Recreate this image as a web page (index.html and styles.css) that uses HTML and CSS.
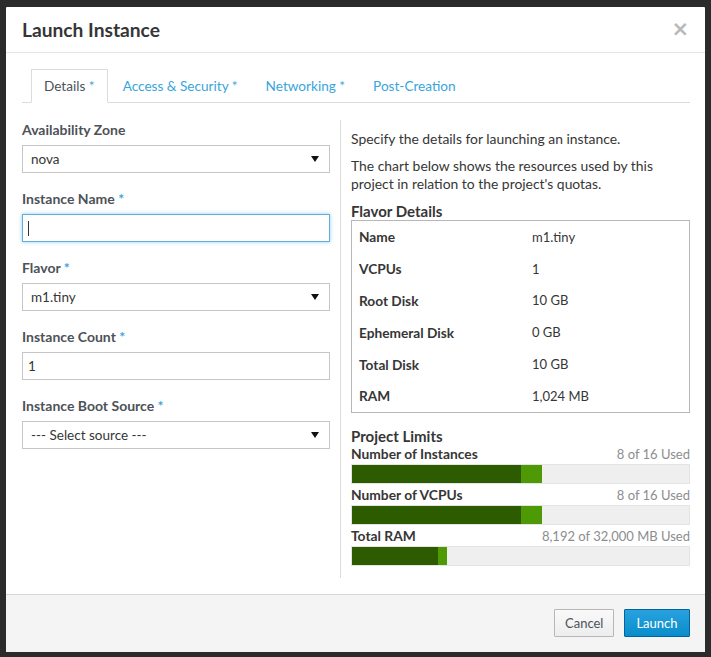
FILE: index.html
```html
<!DOCTYPE html>
<html>
<head>
<meta charset="utf-8">
<title>Launch Instance</title>
<link rel="stylesheet" href="styles.css">
</head>
<body>
<div class="backdrop">
  <div class="modal">
    <div class="modal-header">
      <h3 class="modal-title">Launch Instance</h3>
      <span class="close">×</span>
    </div>
    <div class="modal-body">
      <ul class="tabs">
        <li class="active"><a>Details <span class="req">*</span></a></li>
        <li><a>Access &amp; Security <span class="req">*</span></a></li>
        <li><a>Networking <span class="req">*</span></a></li>
        <li><a>Post-Creation</a></li>
      </ul>
      <div class="tab-content">
        <div class="left">
          <div class="form-group">
            <label class="label">Availability Zone</label>
            <div class="control select"><span>nova</span><span class="caret"></span></div>
          </div>
          <div class="form-group">
            <label class="label">Instance Name <span class="req">*</span></label>
            <div class="control input focus"><span class="cursor"></span></div>
          </div>
          <div class="form-group">
            <label class="label">Flavor <span class="req">*</span></label>
            <div class="control select"><span>m1.tiny</span><span class="caret"></span></div>
          </div>
          <div class="form-group">
            <label class="label">Instance Count <span class="req">*</span></label>
            <div class="control input count"><span>1</span></div>
          </div>
          <div class="form-group">
            <label class="label">Instance Boot Source <span class="req">*</span></label>
            <div class="control select"><span>--- Select source ---</span><span class="caret"></span></div>
          </div>
        </div>
        <div class="right">
          <p class="help">Specify the details for launching an instance.</p>
          <p class="help">The chart below shows the resources used by this project in relation to the project's quotas.</p>
          <h4 class="section-title">Flavor Details</h4>
          <div class="flavor-table">
            <div class="row"><span class="key">Name</span><span class="val">m1.tiny</span></div>
            <div class="row"><span class="key">VCPUs</span><span class="val">1</span></div>
            <div class="row"><span class="key">Root Disk</span><span class="val">10 GB</span></div>
            <div class="row"><span class="key">Ephemeral Disk</span><span class="val">0 GB</span></div>
            <div class="row"><span class="key">Total Disk</span><span class="val">10 GB</span></div>
            <div class="row"><span class="key">RAM</span><span class="val">1,024 MB</span></div>
          </div>
          <h4 class="section-title limits-title">Project Limits</h4>
          <div class="quota">
            <div class="quota-head"><span class="quota-name">Number of Instances</span><span class="quota-used">8 of 16 Used</span></div>
            <div class="bar"><span class="seg used" style="width:50%"></span><span class="seg added" style="width:6.25%"></span></div>
          </div>
          <div class="quota">
            <div class="quota-head"><span class="quota-name">Number of VCPUs</span><span class="quota-used">8 of 16 Used</span></div>
            <div class="bar"><span class="seg used" style="width:50%"></span><span class="seg added" style="width:6.25%"></span></div>
          </div>
          <div class="quota">
            <div class="quota-head"><span class="quota-name">Total RAM</span><span class="quota-used">8,192 of 32,000 MB Used</span></div>
            <div class="bar"><span class="seg used" style="width:25.6%"></span><span class="seg added" style="width:2.6%"></span></div>
          </div>
        </div>
      </div>
    </div>
    <div class="modal-footer">
      <button class="btn btn-default">Cancel</button>
      <button class="btn btn-primary">Launch</button>
    </div>
  </div>
</div>
</body>
</html>
```

FILE: styles.css
```css
* { box-sizing: border-box; }
html, body { margin: 0; padding: 0; }
body {
  background: #2b2b2b;
  font-family: Lato, "Liberation Sans", sans-serif;
  font-size: 13px;
  color: #363636;
}
.backdrop {
  padding: 7px 6px 5px 6px;
  height: 657px;
}
.modal {
  width: 699px;
  height: 645px;
  background: #fff;
  border-radius: 1px;
  display: flex;
  flex-direction: column;
}
.modal-header {
  height: 46px;
  border-bottom: 1px solid #e5e5e5;
  display: flex;
  align-items: center;
  justify-content: space-between;
  padding: 0 16px 0 16px;
}
.modal-title {
  margin: 0;
  font-size: 19.2px;
  font-weight: 700;
  color: #363636;
}
.close {
  font-size: 21px;
  color: #b9b9b9;
  line-height: 1;
  font-family: "DejaVu Sans", sans-serif;
  font-weight: 700;
}
.modal-body {
  flex: 1;
  padding: 16px 15px 0 16px;
}
.tabs {
  list-style: none;
  margin: 0;
  padding: 0 0 0 9px;
  display: flex;
  border-bottom: 1px solid #dcdcdc;
}
.tabs li { margin-bottom: -1px; margin-right: 2px; }
.tabs a {
  display: block;
  line-height: 32px;
  padding: 0 12px 0 12px;
  border: 1px solid transparent;
  color: #39a5dc;
  font-size: 13.6px;
}
.tabs .active a {
  border-color: #dcdcdc #dcdcdc #fff;
  background: #fff;
  color: #4d5258;
}
.req { color: #39a5dc; }
.tab-content {
  display: flex;
  margin-top: 17px;
}
.left {
  width: 308px;
  margin-right: 10px;
  padding-top: 1px;
}
.form-group { margin-bottom: 17px; }
.label {
  display: block;
  font-weight: 700;
  font-size: 14px;
  line-height: 18px;
  margin-bottom: 6px;
  color: #4d5258;
}
.control {
  height: 28px;
  border: 1px solid #c6c6c6;
  display: flex;
  align-items: center;
  padding: 0 8px;
  font-size: 13.5px;
  color: #363636;
}
.select { justify-content: space-between; }
.caret {
  width: 0;
  height: 0;
  border-left: 4px solid transparent;
  border-right: 4px solid transparent;
  border-top: 6px solid #111;
  margin-right: 2px;
}
.focus {
  border-color: #62aed9;
  box-shadow: 0 0 4px rgba(57, 165, 220, 0.55);
  padding-left: 5px;
}
.cursor {
  width: 1px;
  height: 15px;
  background: #333;
}
.count { padding-left: 5px; }
.right {
  border-left: 1px solid #dcdcdc;
  padding: 10px 0 0 10px;
  width: 350px;
  min-height: 458px;
}
.help {
  margin: 0 0 9px;
  line-height: 18px;
  font-size: 13.9px;
  color: #363636;
}
.section-title {
  margin: 0;
  font-size: 15px;
  line-height: 18px;
  font-weight: 700;
  color: #363636;
}
.flavor-table {
  border: 1px solid #b7b7b7;
  height: 193px;
}
.row {
  display: flex;
  height: 31.8px;
  align-items: center;
  padding-left: 7px;
}
.key {
  width: 173px;
  font-weight: 700;
  font-size: 13.7px;
}
.val { font-size: 13px; }
.limits-title { margin-top: 14px; }
.quota { margin-bottom: 2px; }
.quota-head {
  display: flex;
  justify-content: space-between;
  line-height: 18px;
}
.quota-name { font-weight: 700; font-size: 13.8px; }
.quota-used { color: #8b8d8f; font-size: 13px; }
.bar {
  margin-top: 1px;
  height: 20px;
  background: #efefef;
  border: 1px solid #e4e4e4;
  display: flex;
}
.seg { height: 100%; display: block; }
.used { background: #2d5c00; }
.added { background: #4e9a06; }
.modal-footer {
  height: 58px;
  border-top: 1px solid #d6d6d6;
  background: #f4f4f4;
  display: flex;
  justify-content: flex-end;
  align-items: flex-start;
  padding: 14px 15px 0 0;
  gap: 10px;
}
.btn {
  height: 28px;
  font-family: Lato, "Liberation Sans", sans-serif;
  font-size: 13px;
  padding: 0 10px;
  border-radius: 1px;
  cursor: pointer;
}
.btn-default {
  width: 60px;
  background: linear-gradient(#fafafa, #ededed);
  border: 1px solid #b7b7b7;
  color: #4d5258;
}
.btn-primary {
  width: 66px;
  background: linear-gradient(#28a2df, #0a8ccb);
  border: 1px solid #00659c;
  color: #fff;
}
```
